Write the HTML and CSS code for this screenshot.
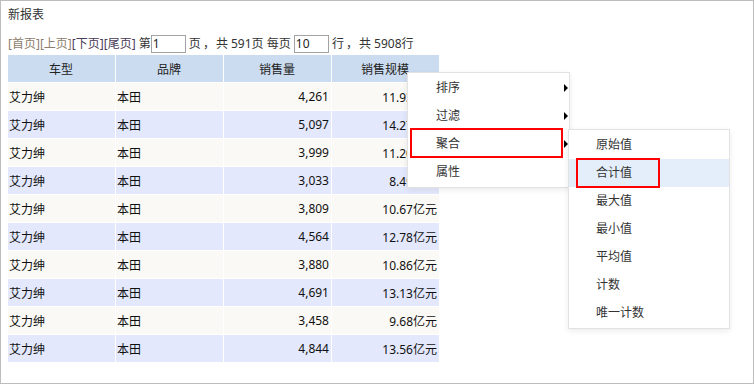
FILE: index.html
```html
<!DOCTYPE html>
<html lang="zh-CN">
<head>
    <meta charset="UTF-8">
    <title>新报表</title>
    <link rel="stylesheet" href="styles.css">
</head>
<body>

    <div class="frame">
        <div class="title">新报表</div>

        <div class="pager">
            <span class="off">[首页]</span><span class="off">[上页]</span><span class="on">[下页]</span><span class="on">[尾页]</span>&nbsp;第<input class="num" value="1">&nbsp;页<span class="comma">，</span>共 591页 每页&nbsp;<input class="num" value="10">&nbsp;行<span class="comma">，</span>共 5908行
        </div>

        <table class="report">
            <thead>
                <tr><th>车型</th><th>品牌</th><th>销售量</th><th>销售规模</th></tr>
            </thead>
            <tbody>
                <tr><td>艾力绅</td><td>本田</td><td class="r">4,261</td><td class="r">11.93亿元</td></tr>
                <tr><td>艾力绅</td><td>本田</td><td class="r">5,097</td><td class="r">14.27亿元</td></tr>
                <tr><td>艾力绅</td><td>本田</td><td class="r">3,999</td><td class="r">11.20亿元</td></tr>
                <tr><td>艾力绅</td><td>本田</td><td class="r">3,033</td><td class="r">8.49亿元</td></tr>
                <tr><td>艾力绅</td><td>本田</td><td class="r">3,809</td><td class="r">10.67亿元</td></tr>
                <tr><td>艾力绅</td><td>本田</td><td class="r">4,564</td><td class="r">12.78亿元</td></tr>
                <tr><td>艾力绅</td><td>本田</td><td class="r">3,880</td><td class="r">10.86亿元</td></tr>
                <tr><td>艾力绅</td><td>本田</td><td class="r">4,691</td><td class="r">13.13亿元</td></tr>
                <tr><td>艾力绅</td><td>本田</td><td class="r">3,458</td><td class="r">9.68亿元</td></tr>
                <tr><td>艾力绅</td><td>本田</td><td class="r">4,844</td><td class="r">13.56亿元</td></tr>
            </tbody>
        </table>

        <!-- Kontextmenü -->
        <ul class="menu main-menu">
            <li class="sub">排序</li>
            <li class="sub">过滤</li>
            <li class="sub marked">聚合</li>
            <li>属性</li>
        </ul>

        <ul class="menu sub-menu">
            <li>原始值</li>
            <li class="active marked">合计值</li>
            <li>最大值</li>
            <li>最小值</li>
            <li>平均值</li>
            <li>计数</li>
            <li>唯一计数</li>
        </ul>
    </div>

</body>
</html>
```

FILE: styles.css
```css
body {
    margin: 0;
    font-family: "Noto Sans", "Noto Sans CJK SC", sans-serif;
    font-size: 12px;
    color: #222;
}

.frame {
    position: relative;
    width: 754px;
    height: 384px;
    box-sizing: border-box;
    border: 1px solid #bdbdbd;
    padding: 5px 7px 0 7px;
}

.title {
    line-height: 18px;
    color: #333;
}

.pager {
    margin-top: 10px;
    height: 20px;
    line-height: 20px;
    color: #333;
    white-space: nowrap;
}

.pager .off {
    color: #8c7d6c;
}

.pager .on {
    color: #4a3b58;
}

.pager .comma {
    padding: 0 1px 0 2px;
}

.num {
    width: 35px;
    height: 18px;
    box-sizing: border-box;
    border: 1px solid #a3a3a3;
    padding: 0 1px;
    font-family: inherit;
    font-size: 12px;
    color: #222;
    vertical-align: middle;
    margin: -2px 0 0 0;
}

.report {
    border-collapse: separate;
    border-spacing: 1px;
    margin: 0 0 0 -1px;
    table-layout: fixed;
}

.report th,
.report td {
    width: 107px;
    height: 27px;
    padding: 0 2px 0 1px;
    box-sizing: border-box;
    white-space: nowrap;
    overflow: hidden;
}

.report th {
    background-color: #ccdcf0;
    font-weight: normal;
    text-align: center;
    color: #222;
}

.report td {
    text-align: left;
    color: #111;
}

.report td.r {
    text-align: right;
}

.report tbody tr:nth-child(odd) td {
    background-color: #faf9f5;
}

.report tbody tr:nth-child(even) td {
    background-color: #e3e8fc;
}

/* menus */
.menu {
    position: absolute;
    list-style: none;
    margin: 0;
    padding: 1px 0;
    background-color: #fff;
    border: 1px solid #e2e2e2;
    box-shadow: 0 2px 6px rgba(0, 0, 0, 0.08);
    color: #333;
}

.menu li {
    position: relative;
    height: 28px;
    line-height: 28px;
}

.main-menu {
    left: 406px;
    top: 71px;
    width: 161px;
}

.main-menu li {
    padding-left: 28px;
}

.main-menu li.sub::before {
    content: "";
    position: absolute;
    right: 1px;
    top: 10px;
    border-left: 4px solid #000;
    border-top: 4px solid transparent;
    border-bottom: 4px solid transparent;
}

.main-menu li.marked::after {
    content: "";
    position: absolute;
    left: 2px;
    top: -2px;
    width: 149px;
    height: 26px;
    border: 2px solid #f00;
}

.sub-menu {
    left: 567px;
    top: 128px;
    width: 160px;
}

.sub-menu li {
    padding-left: 27px;
}

.sub-menu li.active {
    background-color: #e3eefa;
}

.sub-menu li.marked::after {
    content: "";
    position: absolute;
    left: 7px;
    top: -1px;
    width: 80px;
    height: 26px;
    border: 2px solid #f00;
}
```
